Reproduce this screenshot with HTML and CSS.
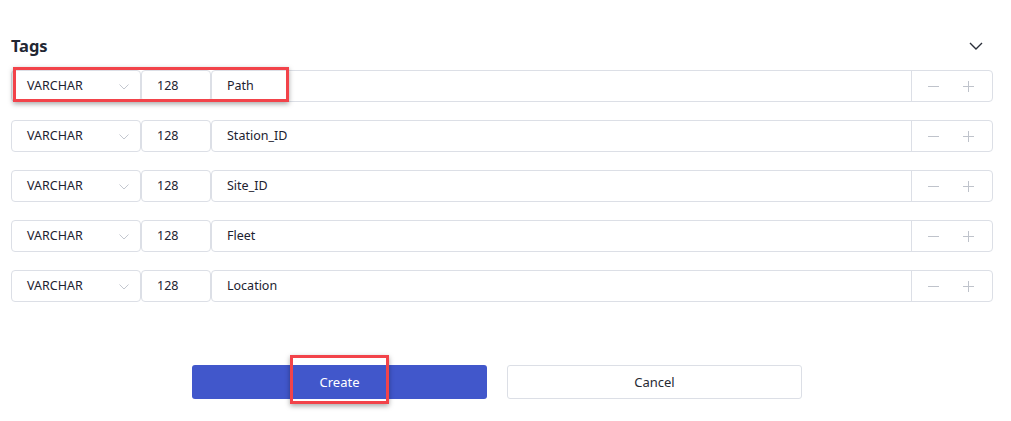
FILE: index.html
```html
<!DOCTYPE html>
<html>
<head>
<meta charset="utf-8">
<link rel="stylesheet" href="styles.css">
</head>
<body>
<div class="page">
  <div class="header">
    <h2 class="title">Tags</h2>
    <svg class="collapse" width="14" height="8" viewBox="0 0 14 8"><path d="M1 1 L7 7 L13 1" fill="none" stroke="#2a2f3a" stroke-width="1.4"/></svg>
  </div>
  <div class="rows">
    <div class="row">
      <div class="select">VARCHAR<svg class="caret" width="10" height="6" viewBox="0 0 10 6"><path d="M0.5 0.5 L5 5 L9.5 0.5" fill="none" stroke="#c3c7cf" stroke-width="1"/></svg></div>
      <div class="num">128</div>
      <div class="field"><span class="name">Path</span><div class="actions"><span class="minus"></span><span class="plus"></span></div></div>
    </div>
    <div class="row">
      <div class="select">VARCHAR<svg class="caret" width="10" height="6" viewBox="0 0 10 6"><path d="M0.5 0.5 L5 5 L9.5 0.5" fill="none" stroke="#c3c7cf" stroke-width="1"/></svg></div>
      <div class="num">128</div>
      <div class="field"><span class="name">Station_ID</span><div class="actions"><span class="minus"></span><span class="plus"></span></div></div>
    </div>
    <div class="row">
      <div class="select">VARCHAR<svg class="caret" width="10" height="6" viewBox="0 0 10 6"><path d="M0.5 0.5 L5 5 L9.5 0.5" fill="none" stroke="#c3c7cf" stroke-width="1"/></svg></div>
      <div class="num">128</div>
      <div class="field"><span class="name">Site_ID</span><div class="actions"><span class="minus"></span><span class="plus"></span></div></div>
    </div>
    <div class="row">
      <div class="select">VARCHAR<svg class="caret" width="10" height="6" viewBox="0 0 10 6"><path d="M0.5 0.5 L5 5 L9.5 0.5" fill="none" stroke="#c3c7cf" stroke-width="1"/></svg></div>
      <div class="num">128</div>
      <div class="field"><span class="name">Fleet</span><div class="actions"><span class="minus"></span><span class="plus"></span></div></div>
    </div>
    <div class="row">
      <div class="select">VARCHAR<svg class="caret" width="10" height="6" viewBox="0 0 10 6"><path d="M0.5 0.5 L5 5 L9.5 0.5" fill="none" stroke="#c3c7cf" stroke-width="1"/></svg></div>
      <div class="num">128</div>
      <div class="field"><span class="name">Location</span><div class="actions"><span class="minus"></span><span class="plus"></span></div></div>
    </div>
  </div>
  <div class="footer">
    <button class="btn primary">Create</button>
    <button class="btn secondary">Cancel</button>
  </div>
</div>
<div class="highlight hl-row"></div>
<div class="highlight hl-create"></div>
</body>
</html>
```
FILE: styles.css
```css
html, body {
  margin: 0;
  padding: 0;
  background: #ffffff;
}
body {
  font-family: "Noto Sans", "Liberation Sans", Arial, sans-serif;
  color: #1d2230;
  position: relative;
  width: 1011px;
  height: 421px;
  overflow: hidden;
}
.page {
  padding: 0 18px 0 11px;
}
.header {
  margin-top: 32px;
  height: 26px;
  display: flex;
  align-items: center;
  justify-content: space-between;
}
.title {
  margin: 0;
  font-size: 16.5px;
  font-weight: 700;
  color: #222733;
  letter-spacing: -0.1px;
}
.collapse {
  margin-right: 10px;
  margin-top: 2px;
}
.rows {
  margin-top: 12px;
  display: flex;
  flex-direction: column;
  gap: 18px;
}
.row {
  display: flex;
  height: 32px;
  font-size: 12.5px;
}
.select, .num, .field {
  box-sizing: border-box;
  height: 32px;
  border: 1px solid #dcdfe6;
  border-radius: 4px;
  display: flex;
  align-items: center;
  padding-bottom: 2px;
}
.select {
  width: 130px;
  padding-left: 15px;
  position: relative;
}
.caret {
  position: absolute;
  left: 107px;
  top: 13px;
}
.num {
  width: 70px;
  padding-left: 15px;
}
.field {
  flex: 1;
  padding-left: 15px;
  padding-bottom: 0;
}
.name {
  flex: 1;
  padding-bottom: 2px;
}
.actions {
  width: 81px;
  height: 100%;
  border-left: 1px solid #dcdfe6;
  display: flex;
  align-items: center;
  justify-content: space-around;
  padding: 0 6px 0 4px;
  box-sizing: border-box;
}
.minus, .plus {
  width: 11px;
  height: 11px;
  position: relative;
}
.minus::before, .plus::before, .plus::after {
  content: "";
  position: absolute;
  background: #bfc3cb;
}
.minus::before, .plus::before {
  left: 0;
  top: 5px;
  width: 11px;
  height: 1px;
}
.plus::after {
  left: 5px;
  top: 0;
  width: 1px;
  height: 11px;
}
.footer {
  margin-top: 63px;
  padding-left: 181px;
  display: flex;
  gap: 20px;
}
.btn {
  width: 295px;
  height: 34px;
  border-radius: 3px;
  font-family: "Noto Sans", "Liberation Sans", Arial, sans-serif;
  font-size: 13px;
  cursor: pointer;
}
.primary {
  background: #4157cb;
  color: #ffffff;
  border: none;
}
.secondary {
  background: #ffffff;
  color: #262a33;
  border: 1px solid #dcdfe6;
}
.highlight {
  position: absolute;
  border: 3px solid #f2434a;
  box-sizing: border-box;
  box-shadow: 0 2px 5px rgba(0, 0, 0, 0.35);
}
.hl-row {
  left: 13px;
  top: 67px;
  width: 276px;
  height: 35px;
}
.hl-create {
  left: 290px;
  top: 355px;
  width: 99px;
  height: 49px;
}
```
